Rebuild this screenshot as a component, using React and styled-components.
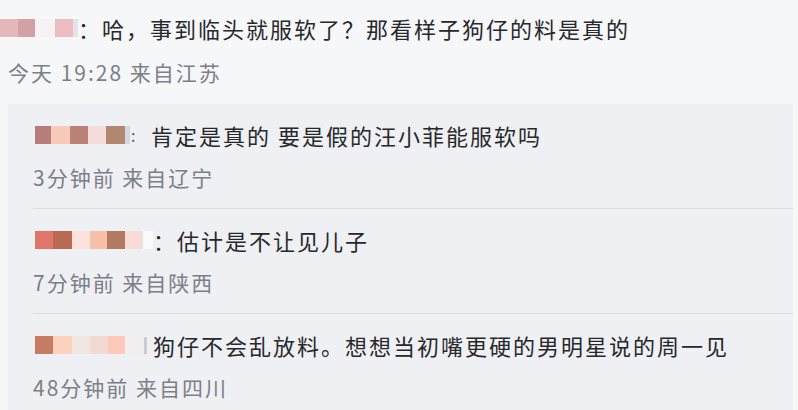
import React from "react";
import styled, { createGlobalStyle } from "styled-components";

const GlobalStyle = createGlobalStyle`
	body {
		margin: 0;
		background: #f6f7f9;
		font-family: "Noto Sans CJK SC", "Noto Sans", sans-serif;
	}
`;

const comment = {
	name: [
		[ "#e4b8bb", 18 ], [ "#d3a0a5", 17 ], [ "#f7f3f4", 20 ], [ "#ecbcc0", 18 ], [ "#e3e3e8", 5 ],
	],
	text: "哈，事到临头就服软了？那看样子狗仔的料是真的",
	meta: "今天 19:28 来自江苏",
};

const replies = [
	{
		name: [
			[ "#b77d7b", 16 ], [ "#f8cbb9", 19 ], [ "#bb8177", 18 ], [ "#f3dcd9", 18 ], [ "#b2876f", 19 ], [ "#d5d8e2", 5 ],
		],
		sep: "dot",
		text: "肯定是真的 要是假的汪小菲能服软吗",
		meta: "3分钟前 来自辽宁",
	},
	{
		name: [
			[ "#e0766a", 18 ], [ "#b86a52", 19 ], [ "#fbe3dc", 18 ], [ "#f6c0a8", 17 ], [ "#b37a62", 18 ], [ "#fadcd6", 18 ], [ "#fafafc", 10 ],
		],
		sep: "full",
		text: "估计是不让见儿子",
		meta: "7分钟前 来自陕西",
	},
	{
		name: [
			[ "#c77b62", 18 ], [ "#fcd2bc", 19 ], [ "#f1e5e2", 18 ], [ "#f3d9d1", 18 ], [ "#fcc9bc", 17 ], [ "#f2eeef", 18 ],
		],
		sep: "bar",
		text: "狗仔不会乱放料。想想当初嘴更硬的男明星说的周一见",
		meta: "48分钟前 来自四川",
	},
];

function Name( { cells } ) {
	return (
		<Mosaic>
			{ cells.map( ( [ c, w ], i ) => <Cell key={ i } $c={ c } $w={ w } /> ) }
		</Mosaic>
	);
}

function Separator( { kind } ) {
	if ( kind === "dot" ) return <Dot>:</Dot>;
	if ( kind === "bar" ) return <Bar />;
	return <Text as="span">：</Text>;
}

export default function App() {
	return (
		<Page>
			<GlobalStyle />
			<Comment>
				<Line>
					<Name cells={ comment.name } />
					<Text>：{ comment.text }</Text>
				</Line>
				<Meta>{ comment.meta }</Meta>
			</Comment>
			<ReplyBox>
				{ replies.map( ( r, i ) => (
					<Reply key={ i }>
						<Line>
							<Name cells={ r.name } />
							<Separator kind={ r.sep } />
							<Text>{ r.text }</Text>
						</Line>
						<Meta>{ r.meta }</Meta>
					</Reply>
				) ) }
			</ReplyBox>
		</Page>
	);
}

const Page = styled.div`
	width: 798px;
	height: 410px;
	overflow: hidden;
`;
const Comment = styled.div`
	padding: 17px 0 21px 0;
`;
const Line = styled.div`
	display: flex;
	align-items: center;
	height: 22px;
	white-space: nowrap;
`;
const Mosaic = styled.span`
	display: flex;
	height: 18px;
`;
const Cell = styled.span`
	width: ${ props => props.$w }px;
	height: 100%;
	background: ${ props => props.$c };
`;
const Text = styled.span`
	font-size: 22px;
	letter-spacing: 2px;
	color: #28282b;
	line-height: 22px;
`;
const Dot = styled.span`
	font-size: 16px;
	color: #555a66;
	width: 20px;
	padding-left: 1px;
	line-height: 22px;
`;
const Bar = styled.span`
	width: 3px;
	height: 17px;
	margin: 0 6px 0 1px;
	background: #c9ccd3;
`;
const Meta = styled.div`
	margin-top: 22px;
	padding-left: 8px;
	font-size: 21px;
	letter-spacing: 2px;
	line-height: 22px;
	color: #7c7f87;
	white-space: nowrap;
`;
const ReplyBox = styled.div`
	margin: 0 5px 0 8px;
	padding-left: 25px;
	background: #eef0f3;
	height: 306px;
`;
const Reply = styled.div`
	padding: 20px 0 20px 0;

	& + & {
		border-top: 1px solid #d9dbe0;
	}

	${ Line } {
		padding-left: 2px;
	}
	${ Meta } {
		margin-top: 20px;
		padding-left: 0;
	}
`;
